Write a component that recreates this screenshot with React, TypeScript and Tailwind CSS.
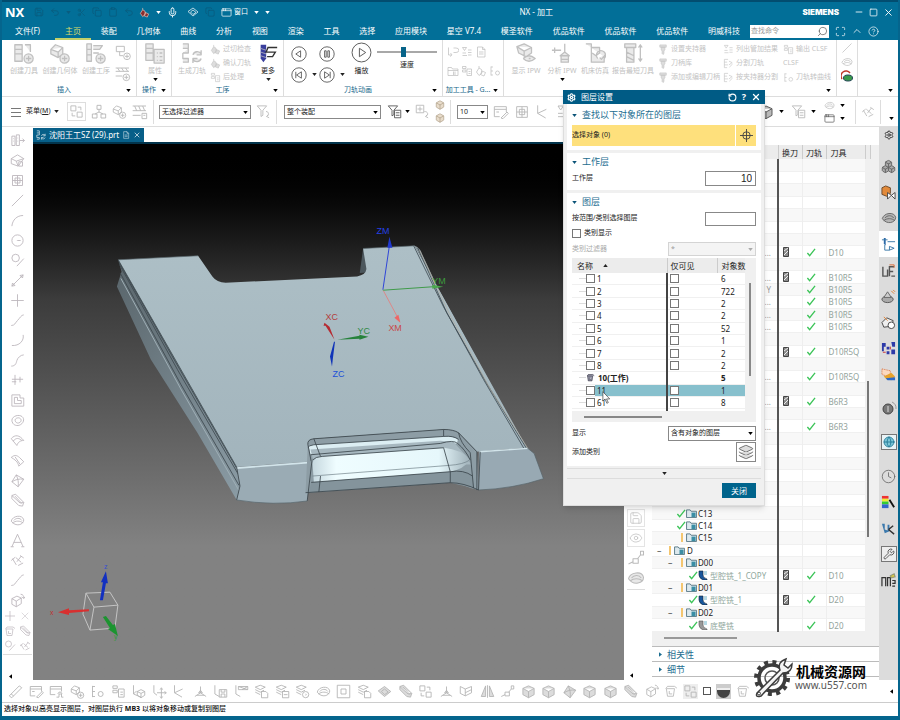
import { ReactNode, useState } from "react"
import {
  AppWindow, Box, Boxes, ChevronUp, CircleHelp, Clipboard, Clock, Copy, Eye,
  Globe, Layers, Maximize, Mic, Minus, RotateCcw, Save, Scissors, Search, Settings, Square, Undo2, Wrench, X,
} from "lucide-react"

const menuTabs = ["主页", "装配", "几何体", "曲线", "分析", "视图", "渲染", "工具", "选择", "应用模块", "星空 V7.4", "模圣软件", "优品软件", "优品软件", "优品软件", "明威科技"]

// 24x24 outlines used by the toolbars
const shapes = {
  tool: "M2 3h8v18H2zM2 8h8M2 13h8M13 3h6v8M17 23a5 5 0 1 0 0-10 5 5 0 0 0 0 10M17 15v6M14 18h6",
  geometry: "M2 8l5-5 8 3v7l-5 4-8-4zM2 8l8 3 5-5M10 11v6M17 23a5 5 0 1 0 0-10 5 5 0 0 0 0 10M17 15v6M14 18h6",
  operation: "M2 2h5v19H2zM2 8h5M2 14h5M9 4h10l-3 4H9M9 12h6M17 23a5 5 0 1 0 0-10 5 5 0 0 0 0 10M17 15v6M14 18h6",
  program: "M2 2h12v8H2zM7 10v6h5M18 22a5 5 0 1 0 0-10 5 5 0 0 0 0 10M18 14v6M15 17h6",
  method: "M1 3h20M1 8h20M4 3l3 5M10 3l3 5M16 3l3 5M1 15h10M17 22a5 5 0 1 0 0-10 5 5 0 0 0 0 10M17 14v6M14 17h6",
  program2: "M1 3h20M1 10h20M1 17h12M4 3l3 7M10 3l3 7M16 3l3 7M15 14h7v8h-7zM17 17h3",
  props: "M2 2h8v18H2zM2 7h8M2 12h8M11 8h11v15H11zM14 12h1M17 12h3M14 16h1M17 16h3M14 20h1M17 20h3",
  generate: "M2 2h6v5H2M2 12h6v-5M2 12v6h6v4H2M13 14a5 5 0 0 1 9-1M22 9v5h-5M22 18a5 5 0 0 1-9 1M13 23v-5h5",
  verify: "M3 14l5-8 5 3 1 7-6 5zM8 6V2M14 12l7 3-3 7-7-3z",
  post: "M3 3h7v4H3zM3 10h7v4H3zM12 8h9v13h-9zM15 13h4M15 17h4",
  mill: "M4 2h14v5H4zM7 7h8v6l-2 2v6l-2 2-2-2v-6l-2-2z",
  ipw: "M2 5l8-3 8 4v6l-6 4-8-4zM2 5l8 5 8-4M10 10v6M9 18q6-6 13 0-7 6-13 0M15 18h2",
  analyse: "M1 9h10M4 6v6M15 2v9l-5 4h10l-5-4M11 15v7h8v-7M11 19h8",
  machine: "M2 2h6v20h14v-6M8 6h9v6l-4 3-4-3M17 17l2 2 4-5M15 18a5 5 0 1 1 7 0",
  shortest: "M3 2h12v4H3zM5 6h8v16H5zM5 11l8 4M5 16l8 4M20 4v16M18 6l2-3 2 3M18 18l2 3 2-3",
  path: "M3 3h8M3 9h6M3 15h8M3 3v18h6M13 7l7 3-7 5M14 20l7-7",
  list: "M3 3l4 6 4-6zM3 14h7M3 19h9M14 8h7M14 13h7M14 18h7",
  doc: "M5 2h10l5 5v15H5zM15 2v5h5M8 12h9M8 16h9",
  link: "M3 3v15h5M7 14l3 4-4 3M13 4h5a5 4 0 0 1 0 9h-5",
  folder: "M2 5h7l2 3h11v13H2zM2 11h20M13 13v7M16 13v7",
  dots: "M4 3v18M4 4h4M4 12h4M4 20h4M17 20a4 4 0 1 0 0-8 4 4 0 0 0 0 8",
  filter: "M2 3h15l-6 7v8l-3 2v-10zM16 12c5 0 5 6 1 8M20 17l-3 3 4 2",
  filterList: "M2 3h15l-6 7v7l-3 2v-9zM12 10h10v12H12zM14 14h6M14 18h6",
  pick: "M2 2h12v12H2zM8 4v8M4 8h8M15 12c6 0 7 5 2 8M20 17l-3 3 4 2",
  dims: "M3 5h5v15H3zM10 3h5v17h-5zM5 9h1M5 13h1M12 8h1M12 13h1M16 12h7M20 9l3 3-3 3",
  sketch: "M2 9l10-6 10 6-9 12-11-4zM2 9l8 4 12-4M10 13l3 8M14 14h6v7h-6z",
  datum: "M4 4h16v16H4zM12 4v16M4 12h16M8 8h8v8H8z",
  line: "M3 21L21 3",
  arc: "M3 21C4 11 11 4 21 4",
  circle: "M12 21a9 9 0 1 0 0-18 9 9 0 0 0 0 18M12 12h5M11 12h1",
  tangent: "M9 14a6 6 0 1 0 0-12 6 6 0 0 0 0 12M11 21L22 9",
  vector: "M3 21L21 3M3 21l1-5 4 4zM21 3l-1 5-4-4z",
  plus: "M12 2v20M2 12h20",
  curve: "M2 20c6 0 6-4 10-8s6-9 10-9",
  hook: "M21 3c2 9-6 18-18 17",
  wave: "M2 21c7 0 8-5 9-9s6-9 11-9",
  cross: "M3 10h18M8 3v16M16 6v9M3 14h7",
  offset: "M3 3h13v5h6v13H3zM7 7h5v5h6v5H7z",
  blob: "M5 17C-1 9 8 3 15 4s9 8 4 13-12 3-14 0M9 14c-3-5 3-7 6-6s4 5 1 7-6 1-7-1",
  surface: "M2 9C8 2 15 3 22 12M2 9l9 11C13 14 17 12 22 12M5 13C10 7 14 8 19 12",
  sheet: "M2 7c6-5 9-3 13 0l7 7-8 7c-1-4-2-8-12-14M8 6l8 12",
  patch: "M3 14L10 3l12 7-9 12zM3 14c7-4 12-5 19-4M10 3c3 7 4 12 3 19",
  slab: "M3 4l6-2 13 13-2 6-6-1L3 9zM3 4l13 12 6-1M8 5l11 12",
  ring: "M2 13c2-9 18-11 20-2 0 8-13 12-20 2M6 12c3-4 10-5 13 0M4 16c5-4 12-4 17 0",
  letter: "M3 22L12 2l9 20M6 15h12M1 22h5M18 22h5",
  text: "M2 12l6-5M4 9l6 10M9 7l9 8M11 14l7-9M16 4l6 4M13 20l8-4",
  cubeArrow: "M3 9l8-4 7 3v9l-8 5-7-4zM3 9l7 4 8-5M10 13v9M17 2c4 0 5 3 5 6M19 6l3 3 2-3",
  pen: "M2 19L18 3l4 3L6 22zM5 16l4 3",
  winPen: "M2 4h18v8M2 4v15h8M2 8h18M5 12h4M12 21l9-9 2 2-8 8z",
  winTree: "M2 4h18v8M2 4v13h8M2 8h18M12 21h4v-5h4v5h3M14 16l2-3h3l2 3",
  assembly: "M9 2h6v6H9zM12 8v4M12 12l-6 3M12 12l6 3M2 15h7v6H2zM15 15h7v6h-7z",
  axis: "M4 2v14l12 5M4 16l5-5M10 12l6-3 6 3v6l-6 4-6-4zM10 12l6 3 6-3M16 15v7",
  axisMove: "M3 2v12l5 4M15 7v15M8 14h14M13 9l2-3 2 3M13 20l2 3 2-3M20 12l3 2-3 2",
  angle: "M4 2v12l12 7M4 14l13-6",
  tri: "M12 4v10L3 20M12 14l9 6M6 18h12M9 14l3-4 3 4z",
  axisSave: "M3 2v14l7 4M10 9h12v12H10zM13 9v4h6V9M13 21v-5h6v5",
  axisWin: "M3 2v14l7 4M7 4h15v5H7zM7 4l15 5M13 9l9-5",
  layerDoc: "M2 5l8-3 8 3-8 4zM2 9l8 4 6-3M2 13l8 4M12 12h7l3 3v7H12z",
  layerSave: "M2 5l8-3 8 3-8 4zM2 9l8 4 6-3M2 13l8 4M12 12h10v10H12zM14 17h6",
  layerGear: "M2 5l8-3 8 3-8 4zM2 9l8 4 6-3M2 13l8 4M17 22a5 5 0 1 0 0-10 5 5 0 0 0 0 10M17 18a1 1 0 1 0 0-2",
  block: "M3 7l9-4 9 4v10l-9 5-9-5zM3 7l9 5 9-5M12 12v10",
  plate: "M2 11L12 4l10 8-10 8zM7 12l5-4 6 5-6 4z",
  route: "M2 20l6-3M8 13h7v6H8zM14 13l4-5M18 3h4v5h-4z",
  mirror: "M9 3v17H2zM12 2v20M15 3v17h7z",
  fold: "M2 4l8 4v11l-8-4zM10 8l10-4v10l-10 5M10 14l10-5",
  frame: "M2 2h20v20H2zM8 8h8v8H8z",
  bin: "M4 8h14l-2 13H6zM3 8l3-4h12l4 3M9 12v5h5",
  swap: "M3 3h8v8H3zM13 13h8v8h-8zM14 5h5v5M5 14v5h5",
}
type Shape = keyof typeof shapes

const Glyph = ({ name, className = "size-4", fill = "none" }: { name: Shape; className?: string; fill?: string }) => (
  <svg viewBox="0 0 24 24" className={`shrink-0 ${className}`} fill={fill} stroke="currentColor" strokeWidth={1.4} strokeLinejoin="round">
    <path d={shapes[name]} />
  </svg>
)

const Caret = ({ className = "" }: { className?: string }) => (
  <svg viewBox="0 0 6 4" className={`h-[3px] w-[5px] shrink-0 ${className}`} fill="currentColor"><path d="M0 0h6L3 4z" /></svg>
)

const Picker = ({ label, value, className = "", faded = false }: { label: string; value: string; className?: string; faded?: boolean }) => (
  <div className={`relative ${className}`}>
    <select aria-label={label} className={`block h-full w-full appearance-none border pl-[2px] text-[7px] leading-[10px] outline-none ${faded ? "border-[#d4d4d4] bg-[#f4f4f4] text-[#999]" : "border-[#888] bg-white text-[#222]"}`}>
      <option>{value}</option>
    </select>
    <Caret className={`pointer-events-none absolute top-1/2 right-[3px] -mt-px ${faded ? "text-[#aaa]" : "text-black"}`} />
  </div>
)

const BigButton = ({ name, label, className = "w-9", caret = false }: { name: Shape; label: string; className?: string; caret?: boolean }) => (
  <button type="button" className={`flex shrink-0 flex-col items-center whitespace-nowrap text-[#c0c0c0] ${className}`}>
    <Glyph name={name} className="size-[22px]" fill="#eaeaea" />
    <span className="mt-[2px] text-[7px] leading-[10px]">{label}</span>
    {caret && <Caret className="mt-[2px] text-black" />}
  </button>
)

const RowButtons = ({ rows, className = "" }: { rows: [Shape | null, string][]; className?: string }) => (
  <div className={`flex shrink-0 flex-col ${className}`}>
    {rows.map(([name, label]) => (
      <button key={label} type="button" className="flex h-[14px] items-center gap-[2px] text-[7px] whitespace-nowrap text-[#c4c4c4]">
        {name && <Glyph name={name} className="size-[11px]" fill={name === "mill" || name === "verify" ? "#ddd" : "none"} />}
        {label}
      </button>
    ))}
  </div>
)

const Group = ({ title, className = "", arrow = true, children }: { title: string; className?: string; arrow?: boolean; children?: ReactNode }) => (
  <section className={`flex flex-col border-r border-[#ddd] ${className}`}>
    <div className="flex h-[46px] pt-[2px]">{children}</div>
    <div className="flex h-[11px] items-center text-[7px] text-[#17678a]">
      <span className="flex-1 text-center whitespace-nowrap">{title}</span>
      {arrow && <Caret className="mr-[5px] text-black" />}
    </div>
  </section>
)

const TitleBar = () => (
  <header className="bg-[#026f98] text-white">
    <div className="flex h-[22px] items-center border-t-2 border-[#024d70] pr-[4px] pl-[3px]">
      <b className="w-[29px] text-[13px] leading-[18px]">NX</b>
      <div className="flex w-[105px] items-center gap-[6px] text-[#0a5c7e]">
        <Save size={10} /><Undo2 size={10} /><Caret /><Scissors size={9} /><Copy size={10} /><Clipboard size={10} /><Undo2 size={10} />
      </div>
      <div className="flex items-center gap-[6px]">
        <Glyph name="verify" className="size-[11px] text-[#f3c9b8]" fill="#8a2e2e" />
        <Caret />
        <Mic size={11} />
        <Glyph name="plate" className="ml-[3px] size-[12px]" />
        <Copy size={10} className="text-[#0a5c7e]" />
        <button type="button" className="flex items-center text-[7px]"><AppWindow size={11} strokeWidth={1.5} className="mr-[2px]" />窗口</button>
        <Caret /><Caret />
      </div>
      <div className="flex-1 text-center text-[8px]">NX - 加工</div>
      <div className="[font-family:Inter,sans-serif] text-[8px] font-black">SIEMENS</div>
      <div className="ml-[15px] flex items-center gap-[5px]">
        <button type="button" aria-label="最小化"><Minus size={10} /></button>
        <button type="button" aria-label="最大化"><Square size={9} /></button>
        <button type="button" aria-label="关闭窗口"><X size={11} /></button>
      </div>
    </div>
    <nav className="flex h-[18px] items-center text-[8px] whitespace-nowrap">
      <a href="#file" className="w-[53px] pl-[13px]">文件(F)</a>
      <div className="flex h-full min-w-0 flex-1">
        {menuTabs.map((tab, i) => (
          <a key={i} href="#tab" className={`flex flex-auto items-center justify-center border-b-2 pt-px ${i === 0 ? "border-[#c3d06a] text-[#d9dc6a]" : "border-transparent"}`}>{tab}</a>
        ))}
      </div>
      <div className="flex h-[13px] w-[79px] items-center bg-white text-[#555]">
        <input aria-label="查找命令" placeholder="查找命令" className="w-0 flex-1 pl-px text-[7px] outline-none placeholder:text-[#999]" />
        <Search size={11} strokeWidth={1.5} className="mr-px -scale-x-100" />
      </div>
      <div className="flex w-[69px] items-center gap-[5px] pl-[6px]">
        <Maximize size={11} strokeWidth={1.5} /><ChevronUp size={12} strokeWidth={1.5} /><CircleHelp size={11} strokeWidth={1.5} />
      </div>
    </nav>
  </header>
)

const RoundButton = ({ label, d, big = false }: { label: string; d: string; big?: boolean }) => (
  <button type="button" aria-label={label}>
    <svg viewBox="0 0 20 20" className={big ? "size-[21px]" : "size-[16px]"} fill="none" stroke="#555" strokeWidth={big ? 0.9 : 1.1}>
      <circle cx="10" cy="10" r="9" /><path d={d} />
    </svg>
  </button>
)

const Ribbon = () => (
  <div className="flex h-[57px] border-b border-[#ddd] bg-white">
    <Group title="插入" className="w-[135px]">
      <BigButton name="tool" label="创建刀具" className="ml-1 w-9" />
      <BigButton name="geometry" label="创建几何体" />
      <BigButton name="operation" label="创建工序" />
      <div className="flex flex-col gap-[5px] pt-[3px] pl-px text-[#bbb]">
        <Glyph name="program" className="size-[16px]" /><Glyph name="method" className="size-[16px]" />
      </div>
    </Group>
    <Group title="操作" className="w-[35px]"><BigButton name="props" label="属性" caret /></Group>
    <Group title="工序" className="w-[112px]">
      <BigButton name="generate" label="生成刀轨" className="ml-[2px] w-9" />
      <RowButtons className="w-[46px]" rows={[["verify", "过切检查"], ["verify", "确认刀轨"], ["post", "后处理"]]} />
      <button type="button" className="flex w-6 flex-col items-center text-[#222]">
        <svg viewBox="0 0 24 24" className="size-[22px]"><path d="M4 3h6v15l-3 4-3-4z" fill="#3a3f9c" /><path d="M4 7l6 2M4 11l6 2M4 15l6 2" stroke="#aab" /><path d="M22 6H12l-2 5h10l-3 5h-6" fill="none" stroke="#333" strokeWidth="1.5" /></svg>
        <span className="mt-[2px] text-[7px] leading-[10px] whitespace-nowrap">更多</span>
        <Caret className="mt-[2px]" />
      </button>
    </Group>
    <Group title="刀轨动画" className="w-[159px]">
      <div className="grid w-[62px] grid-cols-2 pt-[2px] pl-[7px]">
        <RoundButton label="后退" d="M12 6v8l-6-4z" />
        <RoundButton label="暂停" d="M7 6h2v8H7zM11 6h2v8h-2z" />
        <div className="flex items-center gap-[5px]"><RoundButton label="上一步" d="M13 6v8l-6-4zM6 6v8" /><Caret /></div>
        <div className="flex items-center gap-[5px]"><RoundButton label="下一步" d="M7 6v8l6-4zM14 6v8" /><Caret /></div>
      </div>
      <div className="flex w-[31px] flex-col items-center text-[7px] leading-[10px]">
        <RoundButton label="播放" d="M8 6v8l6-4z" big /><span className="mt-[3px]">播放</span>
      </div>
      <label className="flex w-[60px] flex-col items-center text-[7px] leading-[10px]">
        <input type="range" defaultValue="44" className="mt-[5px] h-[10px] w-full appearance-none bg-transparent [&::-webkit-slider-runnable-track]:h-[2px] [&::-webkit-slider-runnable-track]:bg-[#a8a8a8] [&::-webkit-slider-thumb]:-mt-[4px] [&::-webkit-slider-thumb]:h-[10px] [&::-webkit-slider-thumb]:w-[5px] [&::-webkit-slider-thumb]:appearance-none [&::-webkit-slider-thumb]:bg-[#076489]" />
        <span className="mt-[3px]">速度</span>
      </label>
    </Group>
    <Group title="加工工具 - G..." className="w-[61px]">
      <div className="grid grid-cols-4 content-start gap-x-[2px] gap-y-[7px] pt-[4px] pl-[4px] text-[#bbb]">
        {(["link", "list", "doc"] as Shape[]).map((n) => <Glyph key={n} name={n} className="size-[12px]" />)}
        <span />
        {(["folder", "post", "verify", "dots"] as Shape[]).map((n) => <Glyph key={n} name={n} className="size-[12px]" />)}
      </div>
    </Group>
    <Group title="" className="min-w-0 flex-1">
      <BigButton name="ipw" label="显示 IPW" className="ml-1 w-9" />
      <BigButton name="analyse" label="分析 IPW" caret />
      <BigButton name="machine" label="机床仿真" className="w-[30px]" />
      <BigButton name="shortest" label="报告最短刀具" className="w-[46px]" />
      <RowButtons className="ml-[2px] w-[65px]" rows={[["mill", "设置夹持器"], ["mill", "刀柄库"], ["mill", "添加或编辑刀柄"]]} />
      <RowButtons className="w-[60px]" rows={[["list", "列出管加结果"], ["path", "分割刀轨"], ["path", "按夹持器分割"]]} />
      <RowButtons rows={[["post", "输出 CLSF"], [null, "CLSF"], ["dots", "刀轨转曲线"]]} />
    </Group>
    <Group title="" className="w-[21px]" arrow={false}>
      <div className="flex w-full flex-col items-center gap-[2px] text-[#bbb]">
        <Glyph name="line" className="size-[12px]" /><Glyph name="ring" className="size-[12px]" />
        <svg viewBox="0 0 12 12" className="size-[12px]"><path d="M1 9a5 5 0 0 1 8-6" fill="none" stroke="#c0392b" strokeWidth="1.5" /><ellipse cx="7" cy="8" rx="4.500" ry="3" fill="#3a9b4a" stroke="#245" /></svg>
      </div>
    </Group>
    <Group title="" className="w-[40px] border-r-0" />
  </div>
)

const Divider = () => <span className="h-[24px] w-px shrink-0 bg-[#ddd]" />

const SelectionBar = () => (
  <div className="flex h-[30px] items-center border-b border-[#ddd] bg-white text-[#b8b8b8]">
    <button type="button" className="flex w-[60px] items-center pl-[9px] text-[7px] whitespace-nowrap text-[#222]">
      <svg viewBox="0 0 10 10" className="mr-[5px] size-[10px]" stroke="#777"><path d="M0 1.500h10M0 5.500h10M0 9.500h10" /></svg>
      菜单(<u>M</u>)<Caret className="ml-[3px]" />
    </button>
    <div className="flex w-[91px] items-center gap-[5px] pl-[5px]">
      <span className="border border-[#ddd] p-px"><Glyph name="swap" className="size-[15px]" /></span>
      <Glyph name="assembly" className="size-[16px]" /><Glyph name="geometry" className="size-[15px]" /><Glyph name="program2" className="size-[16px]" />
    </div>
    <Divider />
    <Picker label="选择过滤器" value="无选择过滤器" className="ml-[5px] h-[14px] w-[92px]" />
    <Glyph name="filter" className="mx-[5px] size-[15px]" />
    <Divider />
    <Picker label="选择范围" value="整个装配" className="ml-[7px] h-[14px] w-[97px]" />
    <Glyph name="filterList" className="ml-[6px] size-[15px] text-[#555]" />
    <Caret className="mr-[5px] ml-[3px] text-black" />
    <Glyph name="pick" className="size-[15px]" />
    <div className="mx-[5px] flex flex-col gap-[3px] text-[#a89880]">
      <Box size={10} fill="#e8dccb" strokeWidth={1.5} /><Box size={10} fill="#e8dccb" strokeWidth={1.5} />
    </div>
    <Divider />
    <Picker label="数值" value="10" className="ml-[6px] h-[14px] w-[31px]" />
    <div className="ml-[5px] flex flex-1 items-center gap-[5px]">
      <Glyph name="winPen" /><Glyph name="datum" /><Glyph name="angle" /><Glyph name="list" />
    </div>
    <div className="flex items-center gap-[5px] pr-[10px]">
      <Glyph name="block" className="size-[16px] text-[#555]" fill="#bbb" /><Caret className="text-black" />
      <Glyph name="filterList" className="ml-[2px] size-[15px]" /><Caret className="mr-[3px] text-black" />
      <div className="flex flex-col gap-[2px]"><Glyph name="ring" className="size-[11px]" /><AppWindow size={11} strokeWidth={1.5} className="text-[#555]" /></div>
      <div className="flex flex-col gap-[10px] text-black"><Caret /><Caret /></div>
    </div>
    <Divider />
    <Glyph name="text" className="mx-[5px] size-[14px]" />
    <Divider />
    <Caret className="mt-[14px] mr-[4px] ml-[8px] text-black" />
  </div>
)

const leftIcons: Shape[] = ["dims", "sketch", "datum", "line", "arc", "circle", "tangent", "vector", "plus", "curve", "hook", "wave", "cross", "offset", "blob", "surface", "sheet", "patch", "slab", "ring", "letter", "text", "curve", "cubeArrow"]

const LeftBar = () => (
  <aside className="flex w-[31px] shrink-0 flex-col items-center bg-white pt-[3px] text-[#bcb6bc]">
    {leftIcons.map((n, i) => (
      <span key={i} className="flex h-5 items-center"><Glyph name={n} className="size-[15px]" /></span>
    ))}
    <div className="grid grid-cols-2 gap-[3px] border-b border-[#ddd] px-px pb-[2px]">
      <Glyph name="plus" className="size-[12px]" /><X size={12} strokeWidth={1} />
      <Glyph name="bin" className="size-[12px]" /><Glyph name="slab" className="size-[12px]" />
      <Glyph name="tangent" className="size-[12px]" /><Glyph name="text" className="size-[12px]" />
    </div>
    <Caret className="mt-auto mr-[14px] mb-[2px] rotate-90 text-black" />
  </aside>
)

// plate with the machining and work coordinate systems
const Model = () => (
  <svg viewBox="0 0 590 537" className="block h-full w-full" fontFamily="Liberation Sans, sans-serif" fontSize="9">
    <defs>
      <linearGradient id="top" x1="0" y1="0" x2="0" y2="1"><stop offset="0" stopColor="#adbfc6" /><stop offset="1" stopColor="#a2b4bc" /></linearGradient>
      <linearGradient id="side" x1="0" y1="0" x2="1" y2="1"><stop offset="0" stopColor="#59656b" /><stop offset="1" stopColor="#8b9ca5" /></linearGradient>
      <linearGradient id="floor" x1="0" y1="0" x2="1" y2="0"><stop offset="0" stopColor="#c6d8df" /><stop offset=".15" stopColor="#effdff" /><stop offset=".8" stopColor="#e6f7fb" /><stop offset="1" stopColor="#9fb1b9" /></linearGradient>
    </defs>
    <g transform="translate(67 76) scale(.33333)" strokeLinejoin="round">
      <path d="M52 120L62 155L48 200L150 420L290 640L408 842L418 800L408 742z" fill="url(#side)" />
      <path d="M56 135L230 450L413 765M54 126L220 420L410 750M58 160L240 494L415 798" fill="none" stroke="#3c474d" strokeWidth="2.500" />
      <path d="M60 176L240 508L414 812" fill="none" stroke="#9fafb6" strokeWidth="3" />
      <path d="M788 86L778 160L800 158L806 120z" fill="#4c575d" />
      <path d="M943 78Q960 84 966 104L1050 285L1180 520L1285 690L1278 686z" fill="#8c999f" />
      <path d="M52 120L292 108L335 170Q348 188 375 189L770 170Q796 166 798 148L788 86L943 78L1280 685L1130 697L1075 640Q1060 630 1030 630L640 658Q620 660 622 675L632 726L408 743z" fill="url(#top)" />
      <path d="M940 78L1030 262L1150 480L1272 688M952 84L1040 280L1160 492L1281 690" fill="none" stroke="#3f4b52" strokeWidth="2.500" />
      <path d="M958 92L1048 284L1170 508L1285 690" fill="none" stroke="#b0aca0" strokeWidth="2" />
      <path d="M52 120L408 743" stroke="#364248" strokeWidth="2" />
      <path d="M408 743L632 726L620 845Q520 860 408 842L418 800z" fill="#9aabb4" />
      <path d="M408 746L632 729" stroke="#d2e4ea" strokeWidth="5" />
      <path d="M1136 697L1282 686L1302 702L1330 778Q1240 808 1135 812z" fill="#98a9b3" />
      <path d="M1138 697L1282 687" stroke="#d2e4ea" strokeWidth="4" />
      <path d="M622 675Q620 660 640 658L1030 630Q1060 630 1075 640L1130 697L1135 812Q1110 808 1090 798Q1070 790 1050 790L615 820z" fill="#8d9da5" />
      <path d="M624 680L640 676L1030 651Q1060 650 1073 660L1070 672L640 702L630 706z" fill="#dceef3" />
      <path d="M630 690L1020 664L1060 668L1100 712L1112 735L640 730z" fill="#a7b8c0" />
      <path d="M636 730Q640 712 665 711L1030 685Q1085 690 1110 722Q1090 750 1050 757L640 790z" fill="url(#floor)" />
      <path d="M632 789L1050 757Q1100 752 1117 770L1120 806L1050 790L625 820z" fill="#84949c" />
      <path d="M636 770L1046 738Q1090 735 1108 722" fill="none" stroke="#6d7d85" strokeWidth="2" />
      <g fill="none" stroke="#3a454b" strokeWidth="2.500">
        <path d="M632 726L622 675Q620 660 640 658L1030 630Q1060 630 1075 640L1130 697V812" />
        <path d="M622 684Q625 678 640 676L1030 651Q1060 648 1075 660M630 706L1020 672Q1060 660 1072 672Q1095 690 1110 722M636 722Q645 712 665 711L1030 685M1030 685L1050 757M1030 630V651M640 658L660 711M632 789L1050 757Q1090 750 1117 770M660 770L655 818M1050 757V790M1075 640Q1080 670 1110 700L1120 806M634 726L620 845M615 820L1050 790Q1090 790 1135 812M408 743L418 800L408 842M1140 697L1135 812" />
      </g>
      <path d="M408 842Q520 860 620 845M1135 812Q1240 808 1330 778L1302 702L1282 686M788 86L943 78M52 120L292 108" fill="none" stroke="#56636a" strokeWidth="2" />
    </g>
    <g fill="none" strokeWidth="1">
      <path d="M349.500 146L356 102" stroke="#2f45d8" /><path d="M354 104l2-11 3 11z" fill="#2038d0" stroke="none" />
      <path d="M349.500 146.500L400 143" stroke="#3f9b4a" /><path d="M399 141l11 2-11 2z" fill="#4ba84d" stroke="none" />
      <path d="M350 147L365 175" stroke="#d88" /><path d="M361 174l6 5-2-8z" fill="#e66" stroke="none" />
    </g>
    <path d="M301 196l-9-14-2 0 1-3 5 4z" fill="#b52b32" />
    <path d="M304 196l22-4v-1l9 2-9 3v-1z" fill="#26823b" />
    <path d="M301.500 198l-2 16-1 9-2-10 4-15z" fill="#1034b8" />
    <text x="343" y="90" fill="#2440e8">ZM</text>
    <text x="399" y="140" fill="#3c9a3c">YM</text>
    <text x="355" y="187" fill="#c84848">XM</text>
    <text x="292" y="176" fill="#b43c3c">XC</text>
    <text x="324" y="190" fill="#2f8a45">YC</text>
    <text x="299" y="233" fill="#2050d8">ZC</text>
    <path d="M52 450L76 449L84 462L60 464zM52 450L49 471L56 487L60 464M84 462L81 485L56 487" fill="none" stroke="#c4c4c4" />
    <path d="M66 457l3-18-2 0 5-11 2 12h-2l-3 17z" fill="#1230c0" />
    <path d="M55 468l-20 2v2l-11-3 11-4v2l20-1z" fill="#d83030" />
    <path d="M69 474l7 11-2 1 10 7-3-12-2 1-7-9z" fill="#1c9430" />
    <text x="70" y="426" fill="#3a50d0" fontSize="7">z</text>
    <text x="16" y="472" fill="#c03030" fontSize="7">x</text>
    <text x="80" y="496" fill="#2f9a3a" fontSize="7">y</text>
  </svg>
)

const Viewport = () => (
  <main className="flex min-w-0 flex-1 flex-col">
    <div className="flex h-[15px] items-end bg-white">
      <div className="flex h-[14px] items-center gap-[3px] bg-[#075f88] pr-[3px] pl-[3px] text-[8px] whitespace-nowrap text-white">
        <Glyph name="generate" className="size-[10px]" />
        沈阳王工SZ (29).prt
        <Glyph name="doc" className="size-[8px]" />
        <button type="button" aria-label="关闭部件"><X size={8} /></button>
      </div>
    </div>
    <div className="min-h-0 flex-1 border-t-2 border-[#02344c] bg-gradient-to-b from-black via-[#3c3c3c] via-[29%] to-[#828282] to-[75%]"><Model /></div>
  </main>
)

const Tick = ({ className = "" }: { className?: string }) => (
  <svg viewBox="0 0 10 10" className={`h-[9px] w-[10px] shrink-0 ${className}`} fill="none" stroke="#3cc458" strokeWidth="1.500"><path d="M1 5.500L3.500 8.500L9.500 1" /></svg>
)
const Folder = () => (
  <svg viewBox="0 0 12 10" className="h-[9px] w-[11px] shrink-0"><path d="M.5 1h4l1 1.500h6v7H.5z" fill="#dde9ee" stroke="#557582" /><path d="M6 4h4.500v5H6z" fill="#3b8ea5" /></svg>
)
const Cutter = () => (
  <svg viewBox="0 0 6 10" className="mr-auto ml-[4px] block h-[10px] w-[6px]"><path d="M.5.5h5v9h-5z" fill="#8b8b8b" stroke="#444" /><path d="M1 4l4-3M1 8l4-4" stroke="#eee" /></svg>
)
const OpIcon = ({ finish = false }: { finish?: boolean }) => (
  <svg viewBox="0 0 10 10" className="size-[10px] shrink-0">
    <path d="M1 1h4v4q0 3 4 4v1H5Q1 8 1 5z" fill={finish ? "#999" : "#17569c"} stroke={finish ? "#555" : "#123"} strokeWidth=".6" />
    <path d="M6 2h3M6 4h3" stroke="#6fb3c8" />
  </svg>
)

type Node = { kind?: "folder" | "root" | "op"; name?: string; done?: boolean; open?: boolean; finish?: boolean; cutter?: boolean; tool?: string }
const nodes: Node[] = [
  {}, {}, {}, {}, {}, {}, {},
  { name: "...", cutter: true, tool: "D10" },
  {},
  { name: "...", cutter: true, tool: "B10R5" },
  { name: "Y", tool: "B10R5" },
  { name: "...", tool: "B10R5" },
  { name: "...", tool: "B10R5" },
  { name: "...", tool: "B10R5" },
  {},
  { cutter: true, tool: "D10R5Q" },
  {},
  { name: "...", tool: "D10R5Q" },
  {},
  { name: "...", cutter: true, tool: "B6R3" },
  {},
  { name: "...", tool: "B6R3" },
  {}, {}, {}, {}, {},
  { kind: "folder", done: true },
  { kind: "folder", name: "C13", done: true },
  { kind: "folder", name: "C14", done: true },
  { kind: "folder", name: "C15" },
  { kind: "root", name: "D" },
  { kind: "folder", name: "D00", open: true },
  { kind: "op", name: "型腔铣_1_COPY", cutter: true, tool: "D10" },
  { kind: "folder", name: "D01", open: true },
  { kind: "op", name: "型腔铣_1", cutter: true, tool: "D20" },
  { kind: "folder", name: "D02", open: true },
  { kind: "op", name: "底壁铣", finish: true, tool: "D20" },
]

const NodeCell = ({ node }: { node: Node }) => {
  if (node.kind === "root") return (
    <div className="flex items-center pl-[5px]"><span className="w-[12px]">−</span><span className="mr-[3px] h-[9px] w-[2px] bg-[#f3c670]" /><Folder /><span className="ml-[2px]">{node.name}</span></div>
  )
  if (node.kind === "folder") return (
    <div className="flex items-center pl-[16px]">
      <span className="w-[8px]">{node.open && "−"}</span>
      {node.done ? <Tick /> : <span className="mr-[3px] ml-[5px] h-[9px] w-[2px] bg-[#f3c670]" />}
      <Folder /><span className="ml-px">{node.name}</span>
    </div>
  )
  if (node.kind === "op") return (
    <div className="flex items-center pl-[36px] text-[#8fa79c]"><Tick /><OpIcon finish={node.finish} /><span className="ml-[2px]">{node.name}</span></div>
  )
  return <div className="pr-[6px] text-right text-[#999]">{node.name}</div>
}

const Navigator = () => (
  <section className="flex w-[231px] shrink-0 flex-col bg-white pt-[18px] pl-[4px]">
    <div className="flex min-h-0 flex-1 bg-[#f0f0f0]">
      <div className="flex w-[213px] flex-col">
        <table className="h-full w-full table-fixed border-collapse text-[8px] leading-[11px] whitespace-nowrap text-[#222]">
          <colgroup><col className="w-[126px]" /><col className="w-[24px]" /><col className="w-[24px]" /><col /></colgroup>
          <thead>
            <tr className="h-[14px] bg-[#ececec]">
              <th className="border-r border-[#ccc] pl-1 text-left font-normal">名称</th>
              <th className="border-r border-[#ccc] p-0 font-normal">换刀</th>
              <th className="border-r border-[#ccc] p-0 font-normal">刀轨</th>
              <th className="p-0 pl-[4px] text-left font-normal">刀具</th>
            </tr>
          </thead>
          <tbody>
            {nodes.map((node, i) => (
              <tr key={i} className="h-[12px] border-b border-[#f0f0f0] odd:bg-[#f8f8f8] even:bg-white">
                <td className="border-r-2 border-[#555] p-0"><NodeCell node={node} /></td>
                <td className="border-r border-[#eee] p-0">{node.cutter && <Cutter />}</td>
                <td className="border-r border-[#eee] p-0">{node.tool && <Tick className="mr-auto ml-[3px] block" />}</td>
                <td className="p-0 pl-[2px] text-[#93a39c]">{node.tool}</td>
              </tr>
            ))}
          </tbody>
        </table>
      </div>
      <div className="flex flex-1 flex-col items-center pr-[8px]">
        <span className="h-[14px] w-full border-r border-l border-[#ccc] bg-[#ececec]" />
        <span className="flex-[222]" /><span className="w-[2px] flex-[156] bg-[#777]" /><span className="flex-[95]" />
      </div>
    </div>
    <div className="h-[14px] bg-[#f0f0f0] pt-[5px] pl-[12px]"><div className="h-[2px] w-[73px] bg-[#999]" /></div>
    {["相关性", "细节"].map((t) => (
      <button key={t} type="button" className="flex h-[15px] items-center border-t border-[#bbb] pl-[6px] text-[9px] leading-[13px] text-[#1c6d90]">
        <Caret className="mr-[4px] -rotate-90" />{t}
      </button>
    ))}
    <div className="h-[4px] border-t border-[#bbb]" />
  </section>
)

const RightStrip = () => (
  <aside className="flex w-[24px] shrink-0 flex-col items-center bg-white text-[#bbb]">
    <div className="mt-[382px] flex flex-col items-center gap-[2px] border-b border-[#ddd] pb-[2px]">
      <span className="border border-[#e4e4e4] p-px"><Save size={14} strokeWidth={1.2} /></span>
      <span className="border border-[#e4e4e4] p-px"><Eye size={14} strokeWidth={1.2} /></span>
      <Glyph name="route" className="size-[18px]" />
      <Glyph name="ring" className="size-[18px]" fill="#e8e8e8" />
    </div>
    <Caret className="mt-auto mr-[9px] mb-[3px] rotate-90 text-black" />
  </aside>
)

const ResourceBar = () => {
  const item = "flex h-[26px] shrink-0 items-center justify-center"
  return (
    <aside className="flex w-[19px] shrink-0 flex-col bg-[#dcdcdc] text-[#666]">
      <button type="button" aria-label="资源条选项" className="mb-[10px] flex h-4 items-center justify-center text-[#222]"><Settings size={10} /></button>
      <span className={item}><Boxes size={15} fill="#aaa" strokeWidth={1.5} /></span>
      <span className={item}><svg viewBox="0 0 16 16" className="size-[15px]"><path d="M1 3l4-2 5 2v6l-4 3-5-2z" fill="#e28a3a" stroke="#6b4a2c" /><path d="M7 8l4 3-4 4zM15 8l-4 3 4 4z" fill="#fff" stroke="#444" /></svg></span>
      <span className={item}><Glyph name="ring" className="size-[16px]" fill="#b5b5b5" /></span>
      <span className={`${item} bg-white`}><svg viewBox="0 0 16 16" className="size-[15px]" fill="none"><path d="M3 1v6l2 2V1z" fill="#2c69a8" /><path d="M1 3h6M7 5h8M4 8v6h5M9 10l5 2-5 2z" stroke="#3a78a8" /></svg></span>
      <span className={item}><svg viewBox="0 0 16 16" className="size-[15px]" fill="none" stroke="#555"><path d="M2 4v10h5V7M9 14V4h5M9 9h4M11 14h4" strokeWidth="1.500" /><path d="M9 2h5v3" stroke="#d66a35" /></svg></span>
      <span className={item}><svg viewBox="0 0 16 16" className="size-[15px]"><ellipse cx="7" cy="11" rx="6" ry="3.500" fill="#aaa" stroke="#555" /><path d="M3 9l4-6 4 6z" fill="#ccc" stroke="#666" /><path d="M11 2l3 3M13 1l2 2" stroke="#e08030" /></svg></span>
      <span className={item}><svg viewBox="0 0 16 16" className="size-[15px]" fill="#eee" stroke="#444"><path d="M1 8l5-5 7 3-2 6-8 1z" /><circle cx="11" cy="11" r="3.500" fill="#fff" /><path d="M3 2l4 4" stroke="#e08030" /></svg></span>
      <span className={item}><svg viewBox="0 0 16 16" className="size-[15px]"><path d="M1 2h4v4H3v5H1zM6 6h3v3H6zM11 1h4v5h-3zM11 9h4v5h-4zM6 11h3v3H6z" fill="#2d3aa8" /><path d="M2 12h3M10 6v3" stroke="#c33" /></svg></span>
      <span className={item}><svg viewBox="0 0 16 16" className="size-[15px]"><path d="M1 2l9 2v7L1 8z" fill="#fbd9c0" stroke="#d66a35" strokeDasharray="1" /><path d="M3 10l8-4 4 4-4 4-5-1z" fill="#e6a22c" /><path d="M5 12l10-1v3H7z" fill="#2c69c8" /></svg></span>
      <span className="mt-[8px] flex h-[26px] items-center justify-center"><svg viewBox="0 0 16 16" className="size-[16px]" fill="none"><circle cx="7" cy="9" r="5" fill="#777" stroke="#444" /><path d="M7 6v6" stroke="#ddd" /><path d="M11 2a7 7 0 0 1 4 7" stroke="#999" /></svg></span>
      <span className="mt-[8px] flex h-[26px] items-center justify-center"><span className="border border-[#777] bg-[#e9f3f6] p-px text-[#176f8c]"><Globe size={12} fill="#7cc6d8" strokeWidth={1.5} /></span></span>
      <span className="mt-[8px] flex h-[26px] items-center justify-center"><Clock size={15} strokeWidth={1.3} /></span>
      <span className={item}><svg viewBox="0 0 16 16" className="size-[15px]"><path d="M1 1h7v3H1z" fill="#e33" /><path d="M1 4h7v3H1z" fill="#ee3" /><path d="M1 7h7v3H1z" fill="#3c3" /><path d="M1 10h7v4H1z" fill="#36c" /><path d="M9 5l5 8" stroke="#111" strokeWidth="2" /></svg></span>
      <span className={item}><svg viewBox="0 0 16 16" className="size-[15px]"><path d="M1 3h3v6l3 1V4h2v7l-5 2z" fill="#3b79ad" /><path d="M8 9l6 5M8 9l5-4" stroke="#333" strokeWidth="1.500" /></svg></span>
      <span className={item}><span className="border border-[#777] bg-[#eee] p-px text-[#333]"><Wrench size={12} strokeWidth={1.5} /></span></span>
      <span className={item}><svg viewBox="0 0 16 16" className="size-[15px]" fill="none" stroke="#333" strokeWidth="1.300"><path d="M1 14V5h4v9M7 14V5h3v9M12 14h3M12 8h3v3h-3" /><path d="M10 3l4-2 1 3-4 1z" fill="#e8d43a" stroke="#997" /></svg></span>
    </aside>
  )
}

const SectionHead = ({ children }: { children: ReactNode }) => (
  <h2 className="flex h-[18px] items-center text-[9px] text-[#1c6d90]"><Caret className="mr-[5px] text-[#0b5478]" />{children}</h2>
)

// the last row is only half in view
const layers = [["1", "6"], ["2", "722"], ["3", "2"], ["4", "2"], ["5", "52"], ["6", "1"], ["7", "2"], ["8", "2"], ["10(工作)", "5"], ["11", "1"], ["61", "8"], ["", ""]]
const tickBox = "block size-[9px] appearance-none border border-[#777] bg-white checked:bg-[#075f88]"

const LayerDialog = () => {
  const [workLayer, setWorkLayer] = useState("10")
  const [selected, setSelected] = useState("11")

  return (
    <div role="dialog" aria-label="图层设置" className="absolute top-[90px] right-[133px] w-[202px] border border-t-0 border-[#ddd] bg-[#f0f0f0] text-[7px] text-[#222] shadow-md">
      <div className="-mx-px flex h-[14px] items-center bg-[#005b85] px-[4px] text-[9px] text-white">
        <Settings size={9} strokeWidth={3} className="mr-[5px]" />
        <span className="flex-1 text-[8px]">图层设置</span>
        <button type="button" aria-label="重置"><RotateCcw size={9} strokeWidth={3} /></button>
        <button type="button" className="mx-[5px] font-bold">?</button>
        <button type="button" aria-label="关闭对话框"><X size={10} strokeWidth={3} /></button>
      </div>
      <div className="mx-[3px] bg-white px-[5px] pt-[2px] pb-[4px]">
        <SectionHead>查找以下对象所在的图层</SectionHead>
        <button type="button" className="mt-px flex h-[21px] w-full items-center bg-[#fee07c] text-left">
          <span className="flex-1">选择对象 (0)</span>
          <span className="flex h-full w-[21px] items-center justify-center border-l border-white">
            <svg viewBox="0 0 14 14" className="size-[13px]" fill="none" stroke="#444"><circle cx="7" cy="7" r="4" /><path d="M7 0v14M0 7h14" /></svg>
          </span>
        </button>
      </div>
      <div className="mx-[3px] mt-[3px] bg-white px-[5px] pb-[4px]">
        <SectionHead>工作层</SectionHead>
        <label className="flex h-[15px] items-center justify-between">
          工作层
          <input value={workLayer} onChange={(e) => setWorkLayer(e.target.value)} className="h-[15px] w-[51px] border border-[#888] pr-[3px] text-right [font-family:'Liberation_Sans',sans-serif] text-[10px] outline-none" />
        </label>
      </div>
      <div className="mx-[3px] mt-[3px] bg-white px-[5px] pb-[4px]">
        <SectionHead>图层</SectionHead>
        <label className="flex h-[15px] items-center justify-between">
          按范围/类别选择图层
          <input className="h-[14px] w-[51px] border border-[#888] outline-none" />
        </label>
        <label className="flex h-[15px] items-center gap-[3px]"><input type="checkbox" className={tickBox} />类别显示</label>
        <div className="flex h-[16px] items-center justify-between text-[#aaa]">
          类别过滤器
          <Picker label="类别过滤器" value="*" faded className="h-[14px] w-[88px]" />
        </div>
        <div className="mt-px bg-[#f0f0f0]">
          <div className="flex h-[153px] overflow-hidden">
            <table className="h-[164px] w-[173px] table-fixed border-collapse bg-white text-[8px] leading-[11px]">
              <colgroup><col className="w-[95px]" /><col className="w-[50px]" /><col /></colgroup>
              <thead>
                <tr className="h-[15px] bg-[#ececec]">
                  <th className="border-r border-[#ccc] pl-[5px] text-left font-normal"><span className="flex items-center gap-[10px]">名称<Caret className="rotate-180" /></span></th>
                  <th className="border-r border-[#ccc] pl-[3px] text-left font-normal">仅可见</th>
                  <th className="pl-[4px] text-left font-normal whitespace-nowrap">对象数</th>
                </tr>
              </thead>
              <tbody>
                {layers.map(([name, count]) => {
                  const current = name.startsWith("10")
                  const on = name === selected
                  return (
                    <tr key={name} onClick={() => setSelected(name)} className={`border-b border-[#f0f0f0] ${current ? "font-bold" : ""}`}>
                      <td className={`border-r-2 border-[#444] p-0 ${on ? "bg-[linear-gradient(to_right,transparent_23px,#87c0cd_23px)]" : ""}`}>
                        <div className="flex h-[11px] items-center pl-[7px]">
                          <span className="w-[7px] border-t border-[#ddd]" />
                          {current ? <Glyph name="bin" className="mr-px size-[9px] text-[#223]" fill="#99a" /> : <input type="checkbox" aria-label={`图层 ${name}`} className={`${tickBox} shrink-0`} />}
                          <span className="pl-[2px]">{name}</span>
                        </div>
                      </td>
                      <td className={`p-0 pl-[2px] ${on ? "bg-[#87c0cd]" : ""}`}>{!current && <input type="checkbox" aria-label={`${name} 仅可见`} className={`${tickBox} ${on ? "bg-transparent" : ""}`} />}</td>
                      <td className={`p-0 pl-[4px] ${on ? "bg-[#87c0cd]" : ""}`}>{count}</td>
                    </tr>
                  )
                })}
              </tbody>
            </table>
            <div className="flex flex-1 justify-center pt-[25px] pr-[2px]"><span className="h-[93px] w-[2px] bg-[#888]" /></div>
          </div>
          <div className="h-[11px] pt-[5px] pl-[12px]"><div className="h-[2px] w-[78px] bg-[#888]" /></div>
        </div>
        <div className="mt-[3px] flex h-[16px] items-center justify-between">
          显示
          <Picker label="显示" value="含有对象的图层" className="h-[15px] w-[88px]" />
        </div>
        <div className="mt-px flex h-[20px] items-center justify-between">
          添加类别
          <button type="button" aria-label="添加类别" className="flex size-5 items-center justify-center border border-[#888] text-[#555]"><Layers size={16} strokeWidth={1.2} fill="#ddd" /></button>
        </div>
      </div>
      <button type="button" aria-label="更多选项" className="mx-[3px] mt-[2px] flex h-[11px] w-[194px] items-center justify-center border-y border-[#ddd]"><Caret /></button>
      <div className="flex h-[26px] justify-end pt-[4px] pr-[8px]">
        <button type="button" className="h-[15px] w-[34px] bg-[#00648c] text-[8px] leading-[15px] text-white">关闭</button>
      </div>
      <svg viewBox="0 0 12 18" className="absolute top-[301px] left-[38px] h-[13px] w-[9px]" fill="#fff" stroke="#444"><path d="M1 1v13l3-3 2.500 6 2-1-2.500-5h4.500z" /></svg>
    </div>
  )
}

const bottomIcons: Shape[] = ["pen", "winPen", "winTree", "geometry", "dots", "post", "axis", "axisMove", "angle", "tri", "axisSave", "axisWin", "layerDoc", "layerSave", "layerGear", "ring", "frame", "layerDoc", "plate", "slab", "swap", "tri", "fold", "mirror", "route", "block", "block", "patch", "block", "block", "slab"]
const solid: Shape[] = ["block", "slab", "mirror", "plate", "patch"]

const BottomBar = () => (
  <div className="flex h-[23px] items-center border-b border-[#ccc] bg-white text-[#b4b4b4]">
    <div className="flex w-[71%] items-center justify-between pl-[6px]">
      {bottomIcons.map((n, i) => <Glyph key={i} name={n} className="size-[15px]" fill={solid.includes(n) ? "#dcdcdc" : "none"} />)}
    </div>
    <div className="ml-[7px] flex items-center gap-[5px]">
      <Glyph name="cubeArrow" className="size-[14px]" /><Glyph name="bin" className="size-[14px]" /><Glyph name="swap" className="size-[15px] bg-[#eee]" />
      <input type="checkbox" aria-label="显示截面" className="size-[8px] appearance-none border border-[#555]" />
      <span className="flex size-[15px] items-end justify-center bg-[#ccc] p-px"><span className="h-[10px] w-[13px] rounded-b-full border-t-2 border-[#eee] bg-[#444]" /></span>
      <Glyph name="bin" className="size-[14px]" />
    </div>
    <Caret className="mr-[4px] ml-auto rotate-90 text-black" />
  </div>
)

const Watermark = () => (
  <div className="absolute right-[31px] bottom-[18px] flex items-center gap-[2px]">
    <svg viewBox="0 0 40 42" className="h-[42px] w-[40px]" fill="none">
      <circle cx="19" cy="22" r="16" stroke="#3c3c3c" strokeWidth="4" strokeDasharray="4 4.370" />
      <circle cx="19" cy="22" r="13" stroke="#3c3c3c" strokeWidth="3.500" />
      <circle cx="19" cy="22" r="7" stroke="#555" strokeWidth="1.500" />
      <path d="M4 37L27 14Q24 6 33 3L31 9L35 12L39 8Q39 17 30 17L8 40Q2 42 4 37z" fill="#f4f4f4" stroke="#3c3c3c" strokeWidth="1.500" />
      <circle cx="6" cy="37.500" r="1.500" stroke="#3c3c3c" />
    </svg>
    <div className="text-center">
      <div className="[font-family:'Noto_Sans_CJK_SC',sans-serif] text-[14px] leading-[16px] font-bold text-black">机械资源网</div>
      <div className="text-[10px] leading-[12px] text-[#555]">www.u557.com</div>
    </div>
  </div>
)

const App = () => (
  <div className="relative flex h-screen min-h-[700px] w-full flex-col overflow-hidden border-x-2 border-b-4 border-[#05658d] bg-white [font-family:'Noto_Sans','Noto_Sans_CJK_SC',sans-serif] text-[#222]">
    <TitleBar />
    <Ribbon />
    <SelectionBar />
    <div className="flex min-h-0 flex-1">
      <LeftBar />
      <Viewport />
      <RightStrip />
      <Navigator />
      <ResourceBar />
    </div>
    <BottomBar />
    <footer className="h-[13px] pl-[2px] text-[7px] leading-[12px] font-medium text-[#111]">选择对象以高亮显示图层，对图层执行 <b>MB3</b> 以将对象移动或复制到图层</footer>
    <LayerDialog />
    <Watermark />
  </div>
)

export default App
